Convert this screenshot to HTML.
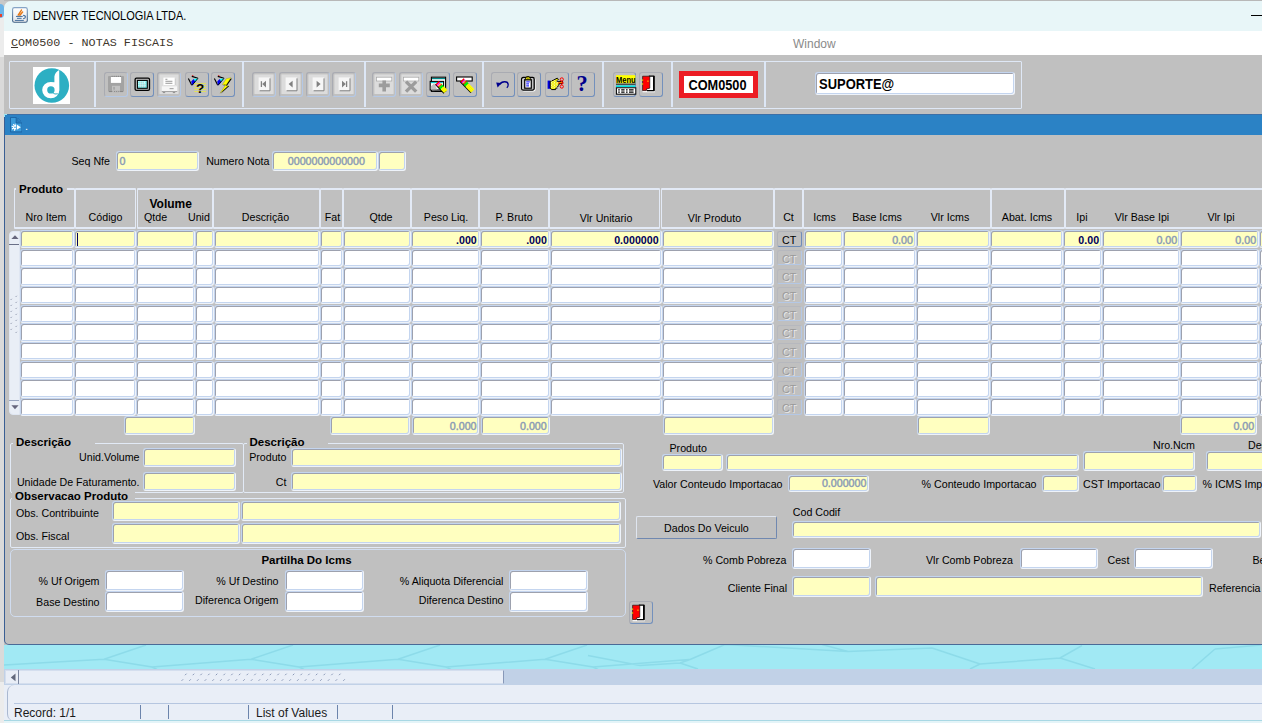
<!DOCTYPE html><html><head><meta charset="utf-8"><title>COM0500 - NOTAS FISCAIS</title><style>
html,body{margin:0;padding:0;background:#c0c0c0;}
#root{position:relative;width:1262px;height:723px;overflow:hidden;background:#c0c0c0;font-family:"Liberation Sans",sans-serif;}
#root div,#root svg.abs{position:absolute;box-sizing:border-box;}
.t{font-size:10.67px;line-height:16px;height:16px;white-space:nowrap;color:#000;}
.b{font-weight:bold;font-size:11.5px;}
.b12{font-size:12px;}
.frlab{background:#c0c0c0;}
.f{border-style:solid;border-width:1px;border-color:#c4d5ef #eef3fa #eef3fa #c4d5ef;box-shadow:inset 1px 1px 0 0 #9da1ae, inset -1px -1px 0 0 #c4d5ef;border-radius:3px;overflow:hidden;}
.f.g{border-width:1px 1.2px 1.7px 1px;}
.f.g span{margin-top:-6.5px;}
.fy{background:#ffffc0;}
.fw{background:#fff;}
.f span{position:absolute;top:50%;margin-top:-7.3px;line-height:15px;font-size:10.67px;white-space:nowrap;}
.f span.nv{font-weight:bold;}
.f span.dn{margin-top:-6.5px;}
.f span.l{left:3px;} .f span.r{right:2px;} .f span.c{left:3px;right:0;text-align:center;}
.gv{color:#8b9cb5;-webkit-text-stroke:0.45px #8b9cb5;} .nv{color:#00005a;}
.hc{border:2px solid #e3eaf6;border-right-width:0.9px;border-left-width:0.9px;border-radius:1px;}
.fr{border:1.8px solid #e2eaf6;border-radius:2px;}
.fr2{border:1px solid #d0dcef;border-radius:5px;}
.ctb{border:1px solid #b0b2b8;border-right-color:#6f8cb8;border-bottom-color:#6f8cb8;border-radius:2.5px;background:#c0c0c0;}
.ctb span{position:absolute;left:0;right:0;top:0.6px;text-align:center;font-size:10.67px;line-height:14px;color:#000;}
.ctb.dis{border-color:#b6b8be;border-right-color:#b4c8e6;border-bottom-color:#b4c8e6;}
.ctb.dis span{color:#9a9a9a;text-shadow:1px 1px 0 #e8e8e8;}
.btn{border:1px solid #dfe5ef;border-right-color:#7088b0;border-bottom-color:#7088b0;border-radius:2px;}
.btn span{position:absolute;left:0;right:0;top:3px;text-align:center;font-size:10.67px;line-height:16px;}
.tb{border:1px solid #a9abb2;border-right-color:#7390bc;border-bottom-color:#7390bc;border-radius:3px;}
.tb.d{border-right-color:#b4c8e6;border-bottom-color:#b4c8e6;}
.tb svg{position:absolute;}
.vsb{background:#e9eef6;border:1px solid #dfe6f2;border-radius:4px 0 0 4px;}
.vsbline{height:1px;background:#6a7088;}
.tsep{width:1.8px;background:#dde7f6;}

</style></head><body><div id="root">
<div style="left:0;top:0;width:4px;height:723px;background:#dadada"></div>
<div style="left:0;top:0;width:4px;height:57px;background:#ececec"></div>
<div style="left:0;top:682px;width:4px;height:41px;background:#ececec"></div>
<div style="left:0;top:0;width:30px;height:12px;background:#c8c8c8"></div>
<div style="left:-4px;top:4px;width:8px;height:14px;background:#6cb4e8;border-radius:4px"></div>
<div style="left:0;top:13.5px;width:2px;height:3px;background:#e8402a"></div>
<div style="left:4px;top:0;width:1258px;height:1px;background:#b8b8b8"></div>
<div style="left:4px;top:1px;width:1258px;height:29.5px;background:#e8f6f8;border-top-left-radius:7px"></div>
<svg class="abs" style="left:12.1px;top:7px" width="15.9" height="15.9" viewBox="0 0 16 16"><defs><linearGradient id="jb" x1="0" y1="0" x2="0" y2="1"><stop offset="0" stop-color="#86a4c6"/><stop offset="1" stop-color="#3e5f84"/></linearGradient><linearGradient id="jf" x1="0" y1="0" x2="0" y2="1"><stop offset="0" stop-color="#fff"/><stop offset="1" stop-color="#e4e6ea"/></linearGradient></defs><rect x="0.6" y="0.6" width="14.8" height="14.8" rx="1.8" fill="url(#jf)" stroke="url(#jb)" stroke-width="1.1"/><path d="M6.2 8.2L9.6 3M7.9 8.3L10.7 5" fill="none" stroke="#e8740c" stroke-width="1.4" stroke-linecap="round" stroke-dasharray="1.4 0.5"/><path d="M4 9.5h6.8M5 11.4h4.7M2.9 13.5h9" fill="none" stroke="#46709c" stroke-width="1"/><path d="M11.2 8.4C14.4 8.6 14.2 11.6 11.2 11.9" fill="none" stroke="#46709c" stroke-width="1.1"/></svg>
<div class="t" style="left:32.9px;top:7.5px;font-size:12px;color:#000;transform:scaleX(0.915);transform-origin:0 0">DENVER TECNOLOGIA LTDA.</div>
<div style="left:1250.5px;top:15px;width:12px;height:1px;background:#000"></div>
<div style="left:4px;top:30.5px;width:1258px;height:24.5px;background:#fff"></div>
<div class="t" style="left:11px;top:35px;font-family:'Liberation Mono',monospace;font-size:11.75px;color:#40362c"><u>C</u>OM0500 - NOTAS FISCAIS</div>
<div class="t" style="left:793px;top:35.5px;font-size:12px;color:#8a8a8a">Window</div>
<div style="left:8.5px;top:60.5px;width:1013.5px;height:48px;border:1.6px solid #dfe8f6;border-radius:1px"></div>
<div class="tsep" style="left:94.3px;top:62px;height:45px"></div>
<div class="tsep" style="left:242.2px;top:62px;height:45px"></div>
<div class="tsep" style="left:363.8px;top:62px;height:45px"></div>
<div class="tsep" style="left:482.2px;top:62px;height:45px"></div>
<div class="tsep" style="left:602.2px;top:62px;height:45px"></div>
<div class="tsep" style="left:671.2px;top:62px;height:45px"></div>
<div class="tsep" style="left:763.8px;top:62px;height:45px"></div>
<div style="left:32.8px;top:66.8px;width:37.4px;height:37.2px;background:#fff"></div>
<svg class="abs" style="left:32.8px;top:66.8px" width="37.4" height="37.2" viewBox="0 0 37.4 37.2"><circle cx="18.8" cy="18.5" r="17.3" fill="#2dafc3"/><path d="M26.2 3 L26.4 23.1 A8.6 8.2 0 1 1 17.8 14.9 L21.4 15.2 L21.4 9.4 Q22 5.4 26.2 3 Z" fill="#fff"/><circle cx="17.9" cy="22.9" r="3.7" fill="#2dafc3"/><path d="M19.6 25.6 Q21.6 27.8 24.8 26.8" fill="none" stroke="#2dafc3" stroke-width="1"/></svg>
<div class="tb d" style="left:104px;top:72.2px;width:24px;height:24.7px"><svg style="left:-1px;top:-1px" width="24" height="24.7" viewBox="0 0 24 24.7"><rect x="4" y="4" width="16" height="15.8" rx="0.8" fill="#a3a3a3"/><rect x="6.9" y="4.9" width="10.2" height="6" fill="#fff"/><path d="M7.6 4.3h10" stroke="#6c6c6c" stroke-width="0.8" stroke-dasharray="1 1.1"/><rect x="8" y="13.8" width="8" height="5" fill="#c2c2c2"/><rect x="9.2" y="14.9" width="1.7" height="2.8" fill="#a6a6a6"/><path d="M5 19.6h3M9 19.6h6M16 19.6h3" stroke="#808080" stroke-width="0.9" stroke-dasharray="3 0 0 0"/><path d="M9 19.6h6" stroke="#c0c0c0" stroke-width="1" stroke-dasharray="1.1 1"/></svg></div>
<div class="tb" style="left:130.3px;top:72.2px;width:24px;height:24.7px"><svg style="left:-1px;top:-1px" width="24" height="24.7" viewBox="0 0 24 24.7"><rect x="5.1" y="6.2" width="14.4" height="12.2" rx="1.4" fill="none" stroke="#000" stroke-width="1.3"/><rect x="7.4" y="8.4" width="9.9" height="7.9" fill="#7ff3f3" stroke="#000" stroke-width="1.1"/><path d="M8.4 9.6h8M8.4 11.6h8M8.4 13.6h8" stroke="#fff" stroke-width="0.9" stroke-dasharray="1 1"/><path d="M8.9 10.6h7M8.9 12.6h7M8.9 14.6h7" stroke="#fff" stroke-width="0.9" stroke-dasharray="1 1" stroke-dashoffset="1"/><path d="M9.4 10.4h4M9.4 12.4h6M9.4 14.3h6" stroke="#b8c4c4" stroke-width="0.6"/></svg></div>
<div class="tb d" style="left:157.3px;top:72.2px;width:24px;height:24.7px"><svg style="left:-1px;top:-1px" width="24" height="24.7" viewBox="0 0 24 24.7"><rect x="2.4" y="2.4" width="19.2" height="19.6" fill="#dcdcdc"/><path d="M7 6h10.4l1 .8v6.6H7z" fill="#b8b8b8"/><rect x="6.4" y="5.6" width="11.4" height="7.4" fill="#fff"/><path d="M8.4 7.3h2M8.4 9.3h7M8.4 11.3h7" stroke="#8c8c8c" stroke-width="0.9"/><path d="M4.8 14.2h15.2v5H4.8z" fill="#f6f6f6"/><path d="M5 14.2l1.4-1h12.4l1.2 1" fill="#e8e8e8"/><path d="M12.6 16.6h4" stroke="#a8a8a8" stroke-width="1.2"/><path d="M4.8 19.5h15.4" stroke="#9c9c9c" stroke-width="0.9"/><path d="M5.8 20.6h2.4M15.8 20.6h2.4" stroke="#909090" stroke-width="1"/></svg></div>
<div class="tb" style="left:184.6px;top:72.2px;width:24px;height:24.7px"><svg style="left:-1px;top:-1px" width="24" height="24.7" viewBox="0 0 24 24.7"><path d="M3.4 6.4L6.6 13" stroke="#000" stroke-width="1.1"/><circle cx="7.7" cy="4" r="0.8" fill="#f00"/><path d="M6.8 4.4L13 6.2" stroke="#000" stroke-width="1.1"/><path d="M8.6 7L13 6.4L10.4 10Z" fill="#0ff"/><path d="M6.2 9.6L8.6 7L10.4 10L7 13.4Z" fill="#00e"/><path d="M13 6.3L7 13.4" stroke="#000" stroke-width="0.9"/><rect x="9.6" y="11.0" width="1" height="1" fill="#ff0"/><rect x="9.6" y="13.0" width="1" height="1" fill="#ff0"/><rect x="9.6" y="15.0" width="1" height="1" fill="#ff0"/><rect x="9.6" y="17.0" width="1" height="1" fill="#ff0"/><rect x="9.6" y="19.0" width="1" height="1" fill="#ff0"/><rect x="11.6" y="11.0" width="1" height="1" fill="#ff0"/><rect x="11.6" y="13.0" width="1" height="1" fill="#ff0"/><rect x="11.6" y="15.0" width="1" height="1" fill="#ff0"/><rect x="11.6" y="17.0" width="1" height="1" fill="#ff0"/><rect x="11.6" y="19.0" width="1" height="1" fill="#ff0"/><rect x="13.6" y="11.0" width="1" height="1" fill="#ff0"/><rect x="13.6" y="13.0" width="1" height="1" fill="#ff0"/><rect x="13.6" y="15.0" width="1" height="1" fill="#ff0"/><rect x="13.6" y="17.0" width="1" height="1" fill="#ff0"/><rect x="13.6" y="19.0" width="1" height="1" fill="#ff0"/><rect x="15.6" y="11.0" width="1" height="1" fill="#ff0"/><rect x="15.6" y="13.0" width="1" height="1" fill="#ff0"/><rect x="15.6" y="15.0" width="1" height="1" fill="#ff0"/><rect x="15.6" y="17.0" width="1" height="1" fill="#ff0"/><rect x="15.6" y="19.0" width="1" height="1" fill="#ff0"/><rect x="17.6" y="11.0" width="1" height="1" fill="#ff0"/><rect x="17.6" y="13.0" width="1" height="1" fill="#ff0"/><rect x="17.6" y="15.0" width="1" height="1" fill="#ff0"/><rect x="17.6" y="17.0" width="1" height="1" fill="#ff0"/><rect x="17.6" y="19.0" width="1" height="1" fill="#ff0"/><rect x="19.6" y="11.0" width="1" height="1" fill="#ff0"/><rect x="19.6" y="13.0" width="1" height="1" fill="#ff0"/><rect x="19.6" y="15.0" width="1" height="1" fill="#ff0"/><rect x="19.6" y="17.0" width="1" height="1" fill="#ff0"/><rect x="19.6" y="19.0" width="1" height="1" fill="#ff0"/><text x="11" y="20.6" font-family="Liberation Sans,sans-serif" font-weight="bold" font-size="13.5" fill="#000">?</text></svg></div>
<div class="tb" style="left:210.9px;top:72.2px;width:24px;height:24.7px"><svg style="left:-1px;top:-1px" width="24" height="24.7" viewBox="0 0 24 24.7"><path d="M3.4 6.4L6.6 13" stroke="#000" stroke-width="1.1"/><circle cx="7.7" cy="4" r="0.8" fill="#f00"/><path d="M6.8 4.4L13 6.2" stroke="#000" stroke-width="1.1"/><path d="M8.6 7L13 6.4L10.4 10Z" fill="#0ff"/><path d="M6.2 9.6L8.6 7L10.4 10L7 13.4Z" fill="#00e"/><path d="M13 6.3L7 13.4" stroke="#000" stroke-width="0.9"/><path d="M21 6.4L16.3 7.4L12.3 13.2L15.4 13.2L10 21.6L18.3 14L15.7 14Z" fill="#000"/><path d="M20 5.7L15.3 6.7L11.3 12.7L14.7 12.7L9 21.3L17.3 13.7L14.7 13.7Z" fill="#ff0" stroke="#7a7a00" stroke-width="0.3"/></svg></div>
<div class="tb d" style="left:252.4px;top:72.2px;width:24px;height:24.7px"><svg style="left:-1px;top:-1px" width="24" height="24.7" viewBox="0 0 24 24.7"><rect x="2.4" y="2.4" width="19.2" height="19.6" fill="#dcdcdc"/><rect x="6.6" y="5.4" width="11.4" height="13.2" fill="#f6f6f6"/><path d="M18 6.4v12.4H7.6" fill="none" stroke="#808080" stroke-width="1"/><path d="M9.4 9.2v5.8" stroke="#808080" stroke-width="1.3"/><path d="M14 8.8v6.6l-3.8-3.3z" fill="#808080"/></svg></div>
<div class="tb d" style="left:279px;top:72.2px;width:24px;height:24.7px"><svg style="left:-1px;top:-1px" width="24" height="24.7" viewBox="0 0 24 24.7"><rect x="2.4" y="2.4" width="19.2" height="19.6" fill="#dcdcdc"/><rect x="6.6" y="5.4" width="11.4" height="13.2" fill="#f6f6f6"/><path d="M18 6.4v12.4H7.6" fill="none" stroke="#808080" stroke-width="1"/><path d="M13.6 8.8v6.6l-4-3.3z" fill="#808080"/></svg></div>
<div class="tb d" style="left:305.7px;top:72.2px;width:24px;height:24.7px"><svg style="left:-1px;top:-1px" width="24" height="24.7" viewBox="0 0 24 24.7"><rect x="2.4" y="2.4" width="19.2" height="19.6" fill="#dcdcdc"/><rect x="6.6" y="5.4" width="11.4" height="13.2" fill="#f6f6f6"/><path d="M18 6.4v12.4H7.6" fill="none" stroke="#808080" stroke-width="1"/><path d="M10.6 8.8v6.6l4-3.3z" fill="#808080"/></svg></div>
<div class="tb d" style="left:332.4px;top:72.2px;width:24px;height:24.7px"><svg style="left:-1px;top:-1px" width="24" height="24.7" viewBox="0 0 24 24.7"><rect x="2.4" y="2.4" width="19.2" height="19.6" fill="#dcdcdc"/><rect x="6.6" y="5.4" width="11.4" height="13.2" fill="#f6f6f6"/><path d="M18 6.4v12.4H7.6" fill="none" stroke="#808080" stroke-width="1"/><path d="M14.6 9.2v5.8" stroke="#808080" stroke-width="1.3"/><path d="M10 8.8v6.6l3.8-3.3z" fill="#808080"/></svg></div>
<div class="tb d" style="left:372.4px;top:72.2px;width:24px;height:24.7px"><svg style="left:-1px;top:-1px" width="24" height="24.7" viewBox="0 0 24 24.7"><rect x="2.4" y="2.4" width="19.2" height="19.6" fill="#dcdcdc"/><rect x="4.4" y="5.2" width="15.4" height="3.8" fill="#fff" stroke="#a4a4a4" stroke-width="0.7"/><path d="M12.2 8.4v11M6.8 13.4h11" stroke="#9c9c9c" stroke-width="3.6"/></svg></div>
<div class="tb d" style="left:399px;top:72.2px;width:24px;height:24.7px"><svg style="left:-1px;top:-1px" width="24" height="24.7" viewBox="0 0 24 24.7"><rect x="2.4" y="2.4" width="19.2" height="19.6" fill="#dcdcdc"/><rect x="4.4" y="5.2" width="15.4" height="3.8" fill="#fff" stroke="#a4a4a4" stroke-width="0.7"/><path d="M7 9.6l10.2 10M17.2 9.6l-10.2 10" stroke="#9c9c9c" stroke-width="3.4"/></svg></div>
<div class="tb" style="left:425.6px;top:72.2px;width:24px;height:24.7px"><svg style="left:-1px;top:-1px" width="24" height="24.7" viewBox="0 0 24 24.7"><rect x="5.4" y="5.2" width="14.2" height="14.2" fill="#fff" stroke="#000" stroke-width="1.1"/><path d="M6 6.6h13" stroke="#088" stroke-width="1.2"/><rect x="4.2" y="9.4" width="13.4" height="8.6" fill="#fff" stroke="#000" stroke-width="1.1"/><path d="M4.8 10.6h12" stroke="#0cc" stroke-width="1.1"/><path d="M4.8 17.4v-3l3.4-3.2l3 6.2z" fill="#c0c0c0"/><path d="M8.6 19.4h9" stroke="#000" stroke-width="1"/><g transform="translate(11.2,10.6) rotate(46)"><path d="M0 2.3h12.4" stroke="#000" stroke-width="1.6"/><rect x="0" y="-2.3" width="1.4" height="4.6" fill="#f00"/><rect x="1.4" y="-2.3" width="1.4" height="4.6" fill="#f0f"/><rect x="2.8" y="-2.3" width="0.9" height="4.6" fill="#ff0"/><rect x="3.7" y="-2.3" width="1" height="4.6" fill="#f00"/><rect x="4.7" y="-2.3" width="2.6" height="4.6" fill="#0e0"/><rect x="7.3" y="-2.3" width="5.1000000000000005" height="4.6" fill="#ff0"/><path d="M7.3 -0.8h5.1000000000000005M7.3 0.8h5.1000000000000005" stroke="#e0e000" stroke-width="0.5"/></g></svg></div>
<div class="tb" style="left:452.6px;top:72.2px;width:24px;height:24.7px"><svg style="left:-1px;top:-1px" width="24" height="24.7" viewBox="0 0 24 24.7"><rect x="3.6" y="5" width="15.6" height="4" fill="#fff" stroke="#000" stroke-width="1.1"/><g transform="translate(9,7.8) rotate(46)"><path d="M0 2.3h15.4" stroke="#000" stroke-width="1.6"/><rect x="0" y="-2.3" width="1.4" height="4.6" fill="#f00"/><rect x="1.4" y="-2.3" width="1.4" height="4.6" fill="#f0f"/><rect x="2.8" y="-2.3" width="0.9" height="4.6" fill="#ff0"/><rect x="3.7" y="-2.3" width="1" height="4.6" fill="#f00"/><rect x="4.7" y="-2.3" width="2.6" height="4.6" fill="#0e0"/><rect x="7.3" y="-2.3" width="8.100000000000001" height="4.6" fill="#ff0"/><path d="M7.3 -0.8h8.100000000000001M7.3 0.8h8.100000000000001" stroke="#e0e000" stroke-width="0.5"/></g></svg></div>
<div class="tb" style="left:490.7px;top:72.2px;width:24px;height:24.7px"><svg style="left:-1px;top:-1px" width="24" height="24.7" viewBox="0 0 24 24.7"><path d="M8.8 12.6C10.4 9 17 8.6 17.2 12.6C17.3 14.2 16.6 15 15.8 15.8" fill="none" stroke="#00008c" stroke-width="1.3"/><path d="M5.2 10.6L10.6 11L6.6 15.4Z" fill="#00008c"/></svg></div>
<div class="tb" style="left:517.2px;top:72.2px;width:24px;height:24.7px"><svg style="left:-1px;top:-1px" width="24" height="24.7" viewBox="0 0 24 24.7"><rect x="5.4" y="6.3" width="12.6" height="12.6" rx="1.5" fill="none" stroke="#fff" stroke-width="1.2"/><rect x="4.6" y="5.5" width="12.6" height="12.6" rx="1.5" fill="none" stroke="#000" stroke-width="1.3"/><rect x="7.7" y="7.8" width="6.6" height="8.4" fill="#fff" stroke="#000" stroke-width="1.2"/><path d="M8 7.7L9.6 4.6H12.2L13.9 7.7Z" fill="#f4ec00" stroke="#000" stroke-width="0.9" stroke-linejoin="round"/><path d="M10.2 6h1.4" stroke="#000" stroke-width="0.8"/><path d="M9.2 9.9h3.6M9.2 11.9h2.8M9.2 13.9h2.8" stroke="#00f" stroke-width="1"/></svg></div>
<div class="tb" style="left:544.5px;top:72.2px;width:24px;height:24.7px"><svg style="left:-1px;top:-1px" width="24" height="24.7" viewBox="0 0 24 24.7"><rect x="2.6" y="8.6" width="2.5" height="8.2" fill="#00d"/><path d="M5.2 9.4l3.2-1.2l3.8-2l1.2 1l-1.8 2.2h6v2.2h-3.6v1.6h-1v1.6h-1v1.6h-1.4v1.2H6.6L5.2 16z" fill="#ee0" stroke="#000" stroke-width="1"/><rect x="6.0" y="8.4" width="0.8" height="0.8" fill="#fff"/><rect x="6.0" y="10.0" width="0.8" height="0.8" fill="#fff"/><rect x="6.0" y="11.6" width="0.8" height="0.8" fill="#fff"/><rect x="6.0" y="13.2" width="0.8" height="0.8" fill="#fff"/><rect x="6.0" y="14.8" width="0.8" height="0.8" fill="#fff"/><rect x="7.6" y="9.2" width="0.8" height="0.8" fill="#fff"/><rect x="7.6" y="10.8" width="0.8" height="0.8" fill="#fff"/><rect x="7.6" y="12.4" width="0.8" height="0.8" fill="#fff"/><rect x="7.6" y="14.0" width="0.8" height="0.8" fill="#fff"/><rect x="7.6" y="15.6" width="0.8" height="0.8" fill="#fff"/><rect x="9.2" y="8.4" width="0.8" height="0.8" fill="#fff"/><rect x="9.2" y="10.0" width="0.8" height="0.8" fill="#fff"/><rect x="9.2" y="11.6" width="0.8" height="0.8" fill="#fff"/><rect x="9.2" y="13.2" width="0.8" height="0.8" fill="#fff"/><rect x="9.2" y="14.8" width="0.8" height="0.8" fill="#fff"/><rect x="10.8" y="9.2" width="0.8" height="0.8" fill="#fff"/><rect x="10.8" y="10.8" width="0.8" height="0.8" fill="#fff"/><rect x="10.8" y="12.4" width="0.8" height="0.8" fill="#fff"/><rect x="10.8" y="14.0" width="0.8" height="0.8" fill="#fff"/><rect x="10.8" y="15.6" width="0.8" height="0.8" fill="#fff"/><rect x="12.4" y="8.4" width="0.8" height="0.8" fill="#fff"/><rect x="12.4" y="10.0" width="0.8" height="0.8" fill="#fff"/><rect x="12.4" y="11.6" width="0.8" height="0.8" fill="#fff"/><rect x="12.4" y="13.2" width="0.8" height="0.8" fill="#fff"/><rect x="12.4" y="14.8" width="0.8" height="0.8" fill="#fff"/><circle cx="16.8" cy="7.4" r="1.6" fill="none" stroke="#f00" stroke-width="1"/><circle cx="16.8" cy="14.6" r="1.6" fill="none" stroke="#f00" stroke-width="1"/><path d="M15.8 8.8l2.6 2.4M15.8 13.2l2.6-2.4M13 11h5" stroke="#f00" stroke-width="0.9"/></svg></div>
<div class="tb" style="left:570.6px;top:72.2px;width:24px;height:24.7px"><svg style="left:-1px;top:-1px" width="24" height="24.7" viewBox="0 0 24 24.7"><text x="5.4" y="19.4" font-family="Liberation Serif,serif" font-weight="bold" font-size="22.5" fill="#00008c">?</text></svg></div>
<div class="tb" style="left:612.5px;top:72.2px;width:23.4px;height:24.7px"><svg style="left:-1px;top:-1px" width="24" height="24.7" viewBox="0 0 24 24.7"><rect x="3" y="3.2" width="19.4" height="8" fill="#ff0"/><text x="3" y="10.6" font-family="Liberation Sans,sans-serif" font-weight="bold" font-size="9.6" fill="#000" textLength="19.6" lengthAdjust="spacingAndGlyphs">Menu</text><path d="M3 12.2h19.4" stroke="#000" stroke-width="0.9"/><path d="M3 14.2h19.4" stroke="#0dd" stroke-width="1.6"/><rect x="3.4" y="15.8" width="19.4" height="6.4" fill="#fff" stroke="#000" stroke-width="1"/><path d="M5.2 17.8h1.6M8.2 17.8h3.4M13 17.8h1.6M16 17.8h4.6M5.2 20.2h1.6M8.2 20.2h3.4M13 20.2h1.6M16 20.2h4.6" stroke="#000" stroke-width="1.2"/></svg></div>
<div class="tb" style="left:638.9px;top:72.2px;width:24px;height:24.7px"><svg style="left:-1px;top:-1px" width="24" height="24.7" viewBox="0 0 24 24.7"><path d="M3.6 19.6h12.2" stroke="#fff" stroke-width="1.4"/><path d="M9.8 4.1h5v14.6H8" fill="#fff" stroke="#000" stroke-width="1.2"/><path d="M14.9 4.1v14.6" stroke="#000" stroke-width="1.6"/><path d="M3.6 4.2h7.2v12l-3.4.8v1.6H3.6z" fill="#f00" stroke="#000" stroke-width="0.6"/><rect x="8.4" y="8.6" width="1.1" height="1.1" fill="#ff0"/><path d="M2.6 8.1h1.6M2.6 12h1.6" stroke="#ff0" stroke-width="1"/></svg></div>
<div style="left:679px;top:71px;width:79px;height:27px;background:#fff;border:5px solid #ec1c24"></div>
<div class="t" style="left:678.3px;width:79px;text-align:center;top:76.6px;font-size:14px;font-weight:bold;transform:scaleX(0.91)">COM0500</div>
<div class="f fw" style="left:815.3px;top:72.2px;width:199.8px;height:23.2px"></div>
<div class="t" style="left:818.6px;top:76.3px;font-size:14px;font-weight:bold;transform:scaleX(0.925);transform-origin:0 0">SUPORTE@</div>
<div style="left:4px;top:113.5px;width:1258px;height:531px;background:#c0c0c0;border-left:1.5px solid #3a5f94;border-bottom:1.5px solid #4a6a96;border-top-left-radius:3px;border-bottom-left-radius:5px"></div>
<div style="left:5px;top:114px;width:1257px;height:21px;background:#2b82c5;border-top:1px solid #3d6fa6"></div>
<svg class="abs" style="left:9.5px;top:117.3px" width="12.4" height="15.3" viewBox="0 0 12.4 15.3"><path d="M0.4 0.4H6.2V6H12V14.9H0.4Z" fill="#3b9ad9" stroke="#1c62a2" stroke-width="1"/><path d="M7.9 1.2L10.8 4.1H7.9Z" fill="#3b96d4" stroke="#2068a8" stroke-width="0.7"/><clipPath id="gh"><rect x="0" y="5" width="5.9" height="10"/></clipPath><g clip-path="url(#gh)"><circle cx="5.2" cy="10.2" r="2.7" fill="none" stroke="#fff" stroke-width="1.8" stroke-dasharray="1.1 1"/><circle cx="5.2" cy="10.2" r="2.2" fill="#fff"/><circle cx="5" cy="10.2" r="0.8" fill="#3b9ad9"/></g><path d="M6.8 7.6L10.8 10.2L6.8 12.8Z" fill="#fff"/></svg>
<div style="left:4.2px;top:114px;width:3px;height:3px;border-left:1.2px solid #9fe8f4;border-top:1.2px solid #9fe8f4"></div>
<div class="t" style="left:25px;top:118.2px;color:#fff;font-size:11px">.</div>
<div style="left:4px;top:644.5px;width:1258px;height:24.5px;background:#a1e9f4"></div>
<svg class="abs" style="left:4px;top:644.5px" width="1258" height="24.5" viewBox="4 644.5 1258 24.5"><path fill="none" stroke="#8ddbe9" stroke-width="1.5" d="M104 658.8L146 644.5M104 658.8L152 666.5L157 669M152 666.5L251 658.8M251 658.8L293 644.5M251 658.8L299 666.5L304 669M299 666.5L398 658.8M398 658.8L440 644.5M398 658.8L446 666.5L451 669M446 666.5L545 658.8M545 658.8L587 644.5M545 658.8L593 666.5L598 669M593 666.5L692 658.8M4 664.6L104 658.8M588 655.0L640 665.0M640 665.0L680 662.5M690 659.0L725 644.0M680 662.5L698 668.5M680 662.5L690 659.0M848 651.0L822 644.0M848 651.0L932 647.5M932 647.5L980 663.5M980 663.5L970 668.5M980 663.5L1060 657.5M1060 657.5L1082 645.0M1060 657.5L1095 668.5M1215 648.5L1261 644.5M1215 648.5L1192 668.5M725 644.0L848 651.0"/></svg>
<div style="left:4px;top:669px;width:1258px;height:15.5px;background:#c1d1e7"></div>
<div style="left:5px;top:669.5px;width:498.5px;height:14.5px;background:#e9eef7;border:1px solid #d4deee;border-right-color:#8898b8"></div>
<div style="left:5px;top:669.5px;width:14px;height:14.5px;border-right:1px solid #7a86a0"></div>
<svg class="abs" style="left:5px;top:669.5px" width="500" height="15" viewBox="0 0 500 15"><path d="M10.5 3.6v7.6L5.8 7.4z" fill="#62687c"/><g stroke="#7d8cae" stroke-width="0.9"><path d="M180.0 5.2l1.5-1.5"/><path d="M187.7 5.2l1.5-1.5"/><path d="M195.4 5.2l1.5-1.5"/><path d="M203.1 5.2l1.5-1.5"/><path d="M210.8 5.2l1.5-1.5"/><path d="M218.5 5.2l1.5-1.5"/><path d="M226.2 5.2l1.5-1.5"/><path d="M233.9 5.2l1.5-1.5"/><path d="M241.6 5.2l1.5-1.5"/><path d="M249.3 5.2l1.5-1.5"/><path d="M257.0 5.2l1.5-1.5"/><path d="M264.7 5.2l1.5-1.5"/><path d="M272.4 5.2l1.5-1.5"/><path d="M280.1 5.2l1.5-1.5"/><path d="M287.8 5.2l1.5-1.5"/><path d="M295.5 5.2l1.5-1.5"/><path d="M303.2 5.2l1.5-1.5"/><path d="M310.9 5.2l1.5-1.5"/><path d="M318.6 5.2l1.5-1.5"/><path d="M326.3 5.2l1.5-1.5"/><path d="M334.0 5.2l1.5-1.5"/><path d="M176.6 10.8l1.5-1.5"/><path d="M184.3 10.8l1.5-1.5"/><path d="M192.0 10.8l1.5-1.5"/><path d="M199.7 10.8l1.5-1.5"/><path d="M207.4 10.8l1.5-1.5"/><path d="M215.1 10.8l1.5-1.5"/><path d="M222.8 10.8l1.5-1.5"/><path d="M230.5 10.8l1.5-1.5"/><path d="M238.2 10.8l1.5-1.5"/><path d="M245.9 10.8l1.5-1.5"/><path d="M253.6 10.8l1.5-1.5"/><path d="M261.3 10.8l1.5-1.5"/><path d="M269.0 10.8l1.5-1.5"/><path d="M276.7 10.8l1.5-1.5"/><path d="M284.4 10.8l1.5-1.5"/><path d="M292.1 10.8l1.5-1.5"/><path d="M299.8 10.8l1.5-1.5"/><path d="M307.5 10.8l1.5-1.5"/><path d="M315.2 10.8l1.5-1.5"/><path d="M322.9 10.8l1.5-1.5"/><path d="M330.6 10.8l1.5-1.5"/><path d="M338.3 10.8l1.5-1.5"/></g></svg>
<div style="left:4px;top:684.5px;width:1258px;height:36px;background:#e9eef7"></div>
<div style="left:7px;top:685px;width:1258px;height:36px;border-left:1px solid #aab8d0;border-radius:7px 0 0 7px"></div>
<div style="left:14px;top:702.8px;width:1248px;height:1.2px;background:#b6c6e0"></div>
<div style="left:4px;top:720px;width:1258px;height:1px;background:#a8d8e4"></div>
<div style="left:4px;top:721px;width:1258px;height:2px;background:#e4f4f8"></div>
<div class="t" style="left:14px;top:704.5px;font-size:12px;color:#1a1a1a">Record: 1/1</div>
<div class="t" style="left:256px;top:704.5px;font-size:12px;color:#1a1a1a">List of Values</div>
<div style="left:140px;top:705px;width:1.3px;height:14px;background:#6c84ac"></div>
<div style="left:168px;top:705px;width:1.3px;height:14px;background:#6c84ac"></div>
<div style="left:248px;top:705px;width:1.3px;height:14px;background:#6c84ac"></div>
<div style="left:337px;top:705px;width:1.3px;height:14px;background:#6c84ac"></div>
<div style="left:392px;top:705px;width:1.3px;height:14px;background:#6c84ac"></div>
<div class="t " style="right:1152px;top:152.7px">Seq Nfe</div>
<div class="f fy" style="left:115.5px;top:151.4px;width:83.7px;height:19.8px"><span class="gv l">0</span></div>
<div class="t " style="right:992.5px;top:152.7px">Numero Nota</div>
<div class="f fy" style="left:271.5px;top:151.4px;width:106.7px;height:19.8px"><span class="gv c">0000000000000</span></div>
<div class="f fy" style="left:378.3px;top:151.4px;width:28.2px;height:19.8px"></div>
<div class="hc" style="left:13.9px;top:188.3px;width:61.3px;height:40.69999999999999px;border-left-width:1.5px;"></div>
<div class="hc" style="left:75.2px;top:188.3px;width:61.3px;height:40.69999999999999px;"></div>
<div class="hc" style="left:136.5px;top:188.3px;width:76.1px;height:40.69999999999999px;"></div>
<div class="hc" style="left:212.6px;top:188.3px;width:107.8px;height:40.69999999999999px;"></div>
<div class="hc" style="left:320.4px;top:188.3px;width:22.9px;height:40.69999999999999px;"></div>
<div class="hc" style="left:343.3px;top:188.3px;width:67.9px;height:40.69999999999999px;"></div>
<div class="hc" style="left:411.2px;top:188.3px;width:68.2px;height:40.69999999999999px;"></div>
<div class="hc" style="left:479.4px;top:188.3px;width:69.3px;height:40.69999999999999px;"></div>
<div class="hc" style="left:548.7px;top:188.3px;width:111.8px;height:40.69999999999999px;"></div>
<div class="hc" style="left:660.5px;top:188.3px;width:113.3px;height:40.69999999999999px;"></div>
<div class="hc" style="left:773.8px;top:188.3px;width:29.0px;height:40.69999999999999px;"></div>
<div class="hc" style="left:802.8px;top:188.3px;width:188.2px;height:40.69999999999999px;"></div>
<div class="hc" style="left:991.0px;top:188.3px;width:73.5px;height:40.69999999999999px;"></div>
<div class="hc" style="left:1064.5px;top:188.3px;width:235.5px;height:40.69999999999999px;"></div>
<div class="t b frlab" style="left:16px;top:181px;padding:0 4px 0 3px">Produto</div>
<div class="t " style="left:-54px;width:200px;text-align:center;top:208.7px">Nro Item</div>
<div class="t " style="left:5.5px;width:200px;text-align:center;top:208.7px">Código</div>
<div class="t b b12" style="left:70.69999999999999px;width:200px;text-align:center;top:196.0px">Volume</div>
<div class="t " style="left:144px;top:208.7px">Qtde</div>
<div class="t " style="left:188px;top:208.7px">Unid</div>
<div class="t " style="left:165.5px;width:200px;text-align:center;top:208.7px">Descrição</div>
<div class="t " style="left:232.5px;width:200px;text-align:center;top:208.7px">Fat</div>
<div class="t " style="left:281px;width:200px;text-align:center;top:208.7px">Qtde</div>
<div class="t " style="left:346px;width:200px;text-align:center;top:208.7px">Peso Liq.</div>
<div class="t " style="left:414px;width:200px;text-align:center;top:208.7px">P. Bruto</div>
<div class="t " style="left:506px;width:200px;text-align:center;top:210.0px">Vlr Unitario</div>
<div class="t " style="left:614.5px;width:200px;text-align:center;top:210.0px">Vlr Produto</div>
<div class="t " style="left:688.5px;width:200px;text-align:center;top:208.7px">Ct</div>
<div class="t " style="left:724.5px;width:200px;text-align:center;top:208.7px">Icms</div>
<div class="t " style="left:777px;width:200px;text-align:center;top:208.7px">Base Icms</div>
<div class="t " style="left:850px;width:200px;text-align:center;top:208.7px">Vlr Icms</div>
<div class="t " style="left:927px;width:200px;text-align:center;top:208.7px">Abat. Icms</div>
<div class="t " style="left:982px;width:200px;text-align:center;top:208.7px">Ipi</div>
<div class="t " style="left:1042px;width:200px;text-align:center;top:208.7px">Vlr Base Ipi</div>
<div class="t " style="left:1121px;width:200px;text-align:center;top:208.7px">Vlr Ipi</div>
<div class="f fy g" style="left:20.2px;top:229.9px;width:54.0px;height:18.6px"></div>
<div class="f fy g" style="left:74.1px;top:229.9px;width:62.1px;height:18.6px"></div>
<div class="f fy g" style="left:136.1px;top:229.9px;width:58.8px;height:18.6px"></div>
<div class="f fy g" style="left:195.2px;top:229.9px;width:18.8px;height:18.6px"></div>
<div class="f fy g" style="left:214.2px;top:229.9px;width:105.8px;height:18.6px"></div>
<div class="f fy g" style="left:320.2px;top:229.9px;width:22.8px;height:18.6px"></div>
<div class="f fy g" style="left:343.3px;top:229.9px;width:67.5px;height:18.6px"></div>
<div class="f fy g" style="left:411.0px;top:229.9px;width:68.8px;height:18.6px"><span class="nv r">.000</span></div>
<div class="f fy g" style="left:480.1px;top:229.9px;width:69.8px;height:18.6px"><span class="nv r">.000</span></div>
<div class="f fy g" style="left:550.0px;top:229.9px;width:111.6px;height:18.6px"><span class="nv r">0.000000</span></div>
<div class="f fy g" style="left:662.0px;top:229.9px;width:112.0px;height:18.6px"></div>
<div class="ctb" style="left:776.6px;top:231.3px;width:25.2px;height:15.4px"><span>CT</span></div>
<div class="f fy g" style="left:804.0px;top:229.9px;width:39.0px;height:18.6px"></div>
<div class="f fy g" style="left:843.2px;top:229.9px;width:72.7px;height:18.6px"><span class="gv r">0.00</span></div>
<div class="f fy g" style="left:916.1px;top:229.9px;width:73.9px;height:18.6px"></div>
<div class="f fy g" style="left:990.2px;top:229.9px;width:73.0px;height:18.6px"></div>
<div class="f fy g" style="left:1063.3px;top:229.9px;width:38.8px;height:18.6px"><span class="nv r">0.00</span></div>
<div class="f fy g" style="left:1102.0px;top:229.9px;width:78.2px;height:18.6px"><span class="gv r">0.00</span></div>
<div class="f fy g" style="left:1180.2px;top:229.9px;width:78.9px;height:18.6px"><span class="gv r">0.00</span></div>
<div class="f fy g" style="left:1259.1px;top:229.9px;width:43.1px;height:18.6px"></div>
<div class="f fw g" style="left:20.2px;top:248.57px;width:54.0px;height:18.6px"></div>
<div class="f fw g" style="left:74.1px;top:248.57px;width:62.1px;height:18.6px"></div>
<div class="f fw g" style="left:136.1px;top:248.57px;width:58.8px;height:18.6px"></div>
<div class="f fw g" style="left:195.2px;top:248.57px;width:18.8px;height:18.6px"></div>
<div class="f fw g" style="left:214.2px;top:248.57px;width:105.8px;height:18.6px"></div>
<div class="f fw g" style="left:320.2px;top:248.57px;width:22.8px;height:18.6px"></div>
<div class="f fw g" style="left:343.3px;top:248.57px;width:67.5px;height:18.6px"></div>
<div class="f fw g" style="left:411.0px;top:248.57px;width:68.8px;height:18.6px"></div>
<div class="f fw g" style="left:480.1px;top:248.57px;width:69.8px;height:18.6px"></div>
<div class="f fw g" style="left:550.0px;top:248.57px;width:111.6px;height:18.6px"></div>
<div class="f fw g" style="left:662.0px;top:248.57px;width:112.0px;height:18.6px"></div>
<div class="ctb dis" style="left:776.6px;top:249.97px;width:25.2px;height:15.4px"><span>CT</span></div>
<div class="f fw g" style="left:804.0px;top:248.57px;width:39.0px;height:18.6px"></div>
<div class="f fw g" style="left:843.2px;top:248.57px;width:72.7px;height:18.6px"></div>
<div class="f fw g" style="left:916.1px;top:248.57px;width:73.9px;height:18.6px"></div>
<div class="f fw g" style="left:990.2px;top:248.57px;width:73.0px;height:18.6px"></div>
<div class="f fw g" style="left:1063.3px;top:248.57px;width:38.8px;height:18.6px"></div>
<div class="f fw g" style="left:1102.0px;top:248.57px;width:78.2px;height:18.6px"></div>
<div class="f fw g" style="left:1180.2px;top:248.57px;width:78.9px;height:18.6px"></div>
<div class="f fw g" style="left:1259.1px;top:248.57px;width:43.1px;height:18.6px"></div>
<div class="f fw g" style="left:20.2px;top:267.23px;width:54.0px;height:18.6px"></div>
<div class="f fw g" style="left:74.1px;top:267.23px;width:62.1px;height:18.6px"></div>
<div class="f fw g" style="left:136.1px;top:267.23px;width:58.8px;height:18.6px"></div>
<div class="f fw g" style="left:195.2px;top:267.23px;width:18.8px;height:18.6px"></div>
<div class="f fw g" style="left:214.2px;top:267.23px;width:105.8px;height:18.6px"></div>
<div class="f fw g" style="left:320.2px;top:267.23px;width:22.8px;height:18.6px"></div>
<div class="f fw g" style="left:343.3px;top:267.23px;width:67.5px;height:18.6px"></div>
<div class="f fw g" style="left:411.0px;top:267.23px;width:68.8px;height:18.6px"></div>
<div class="f fw g" style="left:480.1px;top:267.23px;width:69.8px;height:18.6px"></div>
<div class="f fw g" style="left:550.0px;top:267.23px;width:111.6px;height:18.6px"></div>
<div class="f fw g" style="left:662.0px;top:267.23px;width:112.0px;height:18.6px"></div>
<div class="ctb dis" style="left:776.6px;top:268.63px;width:25.2px;height:15.4px"><span>CT</span></div>
<div class="f fw g" style="left:804.0px;top:267.23px;width:39.0px;height:18.6px"></div>
<div class="f fw g" style="left:843.2px;top:267.23px;width:72.7px;height:18.6px"></div>
<div class="f fw g" style="left:916.1px;top:267.23px;width:73.9px;height:18.6px"></div>
<div class="f fw g" style="left:990.2px;top:267.23px;width:73.0px;height:18.6px"></div>
<div class="f fw g" style="left:1063.3px;top:267.23px;width:38.8px;height:18.6px"></div>
<div class="f fw g" style="left:1102.0px;top:267.23px;width:78.2px;height:18.6px"></div>
<div class="f fw g" style="left:1180.2px;top:267.23px;width:78.9px;height:18.6px"></div>
<div class="f fw g" style="left:1259.1px;top:267.23px;width:43.1px;height:18.6px"></div>
<div class="f fw g" style="left:20.2px;top:285.9px;width:54.0px;height:18.6px"></div>
<div class="f fw g" style="left:74.1px;top:285.9px;width:62.1px;height:18.6px"></div>
<div class="f fw g" style="left:136.1px;top:285.9px;width:58.8px;height:18.6px"></div>
<div class="f fw g" style="left:195.2px;top:285.9px;width:18.8px;height:18.6px"></div>
<div class="f fw g" style="left:214.2px;top:285.9px;width:105.8px;height:18.6px"></div>
<div class="f fw g" style="left:320.2px;top:285.9px;width:22.8px;height:18.6px"></div>
<div class="f fw g" style="left:343.3px;top:285.9px;width:67.5px;height:18.6px"></div>
<div class="f fw g" style="left:411.0px;top:285.9px;width:68.8px;height:18.6px"></div>
<div class="f fw g" style="left:480.1px;top:285.9px;width:69.8px;height:18.6px"></div>
<div class="f fw g" style="left:550.0px;top:285.9px;width:111.6px;height:18.6px"></div>
<div class="f fw g" style="left:662.0px;top:285.9px;width:112.0px;height:18.6px"></div>
<div class="ctb dis" style="left:776.6px;top:287.3px;width:25.2px;height:15.4px"><span>CT</span></div>
<div class="f fw g" style="left:804.0px;top:285.9px;width:39.0px;height:18.6px"></div>
<div class="f fw g" style="left:843.2px;top:285.9px;width:72.7px;height:18.6px"></div>
<div class="f fw g" style="left:916.1px;top:285.9px;width:73.9px;height:18.6px"></div>
<div class="f fw g" style="left:990.2px;top:285.9px;width:73.0px;height:18.6px"></div>
<div class="f fw g" style="left:1063.3px;top:285.9px;width:38.8px;height:18.6px"></div>
<div class="f fw g" style="left:1102.0px;top:285.9px;width:78.2px;height:18.6px"></div>
<div class="f fw g" style="left:1180.2px;top:285.9px;width:78.9px;height:18.6px"></div>
<div class="f fw g" style="left:1259.1px;top:285.9px;width:43.1px;height:18.6px"></div>
<div class="f fw g" style="left:20.2px;top:304.57px;width:54.0px;height:18.6px"></div>
<div class="f fw g" style="left:74.1px;top:304.57px;width:62.1px;height:18.6px"></div>
<div class="f fw g" style="left:136.1px;top:304.57px;width:58.8px;height:18.6px"></div>
<div class="f fw g" style="left:195.2px;top:304.57px;width:18.8px;height:18.6px"></div>
<div class="f fw g" style="left:214.2px;top:304.57px;width:105.8px;height:18.6px"></div>
<div class="f fw g" style="left:320.2px;top:304.57px;width:22.8px;height:18.6px"></div>
<div class="f fw g" style="left:343.3px;top:304.57px;width:67.5px;height:18.6px"></div>
<div class="f fw g" style="left:411.0px;top:304.57px;width:68.8px;height:18.6px"></div>
<div class="f fw g" style="left:480.1px;top:304.57px;width:69.8px;height:18.6px"></div>
<div class="f fw g" style="left:550.0px;top:304.57px;width:111.6px;height:18.6px"></div>
<div class="f fw g" style="left:662.0px;top:304.57px;width:112.0px;height:18.6px"></div>
<div class="ctb dis" style="left:776.6px;top:305.97px;width:25.2px;height:15.4px"><span>CT</span></div>
<div class="f fw g" style="left:804.0px;top:304.57px;width:39.0px;height:18.6px"></div>
<div class="f fw g" style="left:843.2px;top:304.57px;width:72.7px;height:18.6px"></div>
<div class="f fw g" style="left:916.1px;top:304.57px;width:73.9px;height:18.6px"></div>
<div class="f fw g" style="left:990.2px;top:304.57px;width:73.0px;height:18.6px"></div>
<div class="f fw g" style="left:1063.3px;top:304.57px;width:38.8px;height:18.6px"></div>
<div class="f fw g" style="left:1102.0px;top:304.57px;width:78.2px;height:18.6px"></div>
<div class="f fw g" style="left:1180.2px;top:304.57px;width:78.9px;height:18.6px"></div>
<div class="f fw g" style="left:1259.1px;top:304.57px;width:43.1px;height:18.6px"></div>
<div class="f fw g" style="left:20.2px;top:323.24px;width:54.0px;height:18.59px"></div>
<div class="f fw g" style="left:74.1px;top:323.24px;width:62.1px;height:18.59px"></div>
<div class="f fw g" style="left:136.1px;top:323.24px;width:58.8px;height:18.59px"></div>
<div class="f fw g" style="left:195.2px;top:323.24px;width:18.8px;height:18.59px"></div>
<div class="f fw g" style="left:214.2px;top:323.24px;width:105.8px;height:18.59px"></div>
<div class="f fw g" style="left:320.2px;top:323.24px;width:22.8px;height:18.59px"></div>
<div class="f fw g" style="left:343.3px;top:323.24px;width:67.5px;height:18.59px"></div>
<div class="f fw g" style="left:411.0px;top:323.24px;width:68.8px;height:18.59px"></div>
<div class="f fw g" style="left:480.1px;top:323.24px;width:69.8px;height:18.59px"></div>
<div class="f fw g" style="left:550.0px;top:323.24px;width:111.6px;height:18.59px"></div>
<div class="f fw g" style="left:662.0px;top:323.24px;width:112.0px;height:18.59px"></div>
<div class="ctb dis" style="left:776.6px;top:324.64px;width:25.2px;height:15.4px"><span>CT</span></div>
<div class="f fw g" style="left:804.0px;top:323.24px;width:39.0px;height:18.59px"></div>
<div class="f fw g" style="left:843.2px;top:323.24px;width:72.7px;height:18.59px"></div>
<div class="f fw g" style="left:916.1px;top:323.24px;width:73.9px;height:18.59px"></div>
<div class="f fw g" style="left:990.2px;top:323.24px;width:73.0px;height:18.59px"></div>
<div class="f fw g" style="left:1063.3px;top:323.24px;width:38.8px;height:18.59px"></div>
<div class="f fw g" style="left:1102.0px;top:323.24px;width:78.2px;height:18.59px"></div>
<div class="f fw g" style="left:1180.2px;top:323.24px;width:78.9px;height:18.59px"></div>
<div class="f fw g" style="left:1259.1px;top:323.24px;width:43.1px;height:18.59px"></div>
<div class="f fw g" style="left:20.2px;top:341.9px;width:54.0px;height:18.6px"></div>
<div class="f fw g" style="left:74.1px;top:341.9px;width:62.1px;height:18.6px"></div>
<div class="f fw g" style="left:136.1px;top:341.9px;width:58.8px;height:18.6px"></div>
<div class="f fw g" style="left:195.2px;top:341.9px;width:18.8px;height:18.6px"></div>
<div class="f fw g" style="left:214.2px;top:341.9px;width:105.8px;height:18.6px"></div>
<div class="f fw g" style="left:320.2px;top:341.9px;width:22.8px;height:18.6px"></div>
<div class="f fw g" style="left:343.3px;top:341.9px;width:67.5px;height:18.6px"></div>
<div class="f fw g" style="left:411.0px;top:341.9px;width:68.8px;height:18.6px"></div>
<div class="f fw g" style="left:480.1px;top:341.9px;width:69.8px;height:18.6px"></div>
<div class="f fw g" style="left:550.0px;top:341.9px;width:111.6px;height:18.6px"></div>
<div class="f fw g" style="left:662.0px;top:341.9px;width:112.0px;height:18.6px"></div>
<div class="ctb dis" style="left:776.6px;top:343.3px;width:25.2px;height:15.4px"><span>CT</span></div>
<div class="f fw g" style="left:804.0px;top:341.9px;width:39.0px;height:18.6px"></div>
<div class="f fw g" style="left:843.2px;top:341.9px;width:72.7px;height:18.6px"></div>
<div class="f fw g" style="left:916.1px;top:341.9px;width:73.9px;height:18.6px"></div>
<div class="f fw g" style="left:990.2px;top:341.9px;width:73.0px;height:18.6px"></div>
<div class="f fw g" style="left:1063.3px;top:341.9px;width:38.8px;height:18.6px"></div>
<div class="f fw g" style="left:1102.0px;top:341.9px;width:78.2px;height:18.6px"></div>
<div class="f fw g" style="left:1180.2px;top:341.9px;width:78.9px;height:18.6px"></div>
<div class="f fw g" style="left:1259.1px;top:341.9px;width:43.1px;height:18.6px"></div>
<div class="f fw g" style="left:20.2px;top:360.57px;width:54.0px;height:18.6px"></div>
<div class="f fw g" style="left:74.1px;top:360.57px;width:62.1px;height:18.6px"></div>
<div class="f fw g" style="left:136.1px;top:360.57px;width:58.8px;height:18.6px"></div>
<div class="f fw g" style="left:195.2px;top:360.57px;width:18.8px;height:18.6px"></div>
<div class="f fw g" style="left:214.2px;top:360.57px;width:105.8px;height:18.6px"></div>
<div class="f fw g" style="left:320.2px;top:360.57px;width:22.8px;height:18.6px"></div>
<div class="f fw g" style="left:343.3px;top:360.57px;width:67.5px;height:18.6px"></div>
<div class="f fw g" style="left:411.0px;top:360.57px;width:68.8px;height:18.6px"></div>
<div class="f fw g" style="left:480.1px;top:360.57px;width:69.8px;height:18.6px"></div>
<div class="f fw g" style="left:550.0px;top:360.57px;width:111.6px;height:18.6px"></div>
<div class="f fw g" style="left:662.0px;top:360.57px;width:112.0px;height:18.6px"></div>
<div class="ctb dis" style="left:776.6px;top:361.97px;width:25.2px;height:15.4px"><span>CT</span></div>
<div class="f fw g" style="left:804.0px;top:360.57px;width:39.0px;height:18.6px"></div>
<div class="f fw g" style="left:843.2px;top:360.57px;width:72.7px;height:18.6px"></div>
<div class="f fw g" style="left:916.1px;top:360.57px;width:73.9px;height:18.6px"></div>
<div class="f fw g" style="left:990.2px;top:360.57px;width:73.0px;height:18.6px"></div>
<div class="f fw g" style="left:1063.3px;top:360.57px;width:38.8px;height:18.6px"></div>
<div class="f fw g" style="left:1102.0px;top:360.57px;width:78.2px;height:18.6px"></div>
<div class="f fw g" style="left:1180.2px;top:360.57px;width:78.9px;height:18.6px"></div>
<div class="f fw g" style="left:1259.1px;top:360.57px;width:43.1px;height:18.6px"></div>
<div class="f fw g" style="left:20.2px;top:379.24px;width:54.0px;height:18.6px"></div>
<div class="f fw g" style="left:74.1px;top:379.24px;width:62.1px;height:18.6px"></div>
<div class="f fw g" style="left:136.1px;top:379.24px;width:58.8px;height:18.6px"></div>
<div class="f fw g" style="left:195.2px;top:379.24px;width:18.8px;height:18.6px"></div>
<div class="f fw g" style="left:214.2px;top:379.24px;width:105.8px;height:18.6px"></div>
<div class="f fw g" style="left:320.2px;top:379.24px;width:22.8px;height:18.6px"></div>
<div class="f fw g" style="left:343.3px;top:379.24px;width:67.5px;height:18.6px"></div>
<div class="f fw g" style="left:411.0px;top:379.24px;width:68.8px;height:18.6px"></div>
<div class="f fw g" style="left:480.1px;top:379.24px;width:69.8px;height:18.6px"></div>
<div class="f fw g" style="left:550.0px;top:379.24px;width:111.6px;height:18.6px"></div>
<div class="f fw g" style="left:662.0px;top:379.24px;width:112.0px;height:18.6px"></div>
<div class="ctb dis" style="left:776.6px;top:380.64px;width:25.2px;height:15.4px"><span>CT</span></div>
<div class="f fw g" style="left:804.0px;top:379.24px;width:39.0px;height:18.6px"></div>
<div class="f fw g" style="left:843.2px;top:379.24px;width:72.7px;height:18.6px"></div>
<div class="f fw g" style="left:916.1px;top:379.24px;width:73.9px;height:18.6px"></div>
<div class="f fw g" style="left:990.2px;top:379.24px;width:73.0px;height:18.6px"></div>
<div class="f fw g" style="left:1063.3px;top:379.24px;width:38.8px;height:18.6px"></div>
<div class="f fw g" style="left:1102.0px;top:379.24px;width:78.2px;height:18.6px"></div>
<div class="f fw g" style="left:1180.2px;top:379.24px;width:78.9px;height:18.6px"></div>
<div class="f fw g" style="left:1259.1px;top:379.24px;width:43.1px;height:18.6px"></div>
<div class="f fw g" style="left:20.2px;top:397.9px;width:54.0px;height:18.6px"></div>
<div class="f fw g" style="left:74.1px;top:397.9px;width:62.1px;height:18.6px"></div>
<div class="f fw g" style="left:136.1px;top:397.9px;width:58.8px;height:18.6px"></div>
<div class="f fw g" style="left:195.2px;top:397.9px;width:18.8px;height:18.6px"></div>
<div class="f fw g" style="left:214.2px;top:397.9px;width:105.8px;height:18.6px"></div>
<div class="f fw g" style="left:320.2px;top:397.9px;width:22.8px;height:18.6px"></div>
<div class="f fw g" style="left:343.3px;top:397.9px;width:67.5px;height:18.6px"></div>
<div class="f fw g" style="left:411.0px;top:397.9px;width:68.8px;height:18.6px"></div>
<div class="f fw g" style="left:480.1px;top:397.9px;width:69.8px;height:18.6px"></div>
<div class="f fw g" style="left:550.0px;top:397.9px;width:111.6px;height:18.6px"></div>
<div class="f fw g" style="left:662.0px;top:397.9px;width:112.0px;height:18.6px"></div>
<div class="ctb dis" style="left:776.6px;top:399.3px;width:25.2px;height:15.4px"><span>CT</span></div>
<div class="f fw g" style="left:804.0px;top:397.9px;width:39.0px;height:18.6px"></div>
<div class="f fw g" style="left:843.2px;top:397.9px;width:72.7px;height:18.6px"></div>
<div class="f fw g" style="left:916.1px;top:397.9px;width:73.9px;height:18.6px"></div>
<div class="f fw g" style="left:990.2px;top:397.9px;width:73.0px;height:18.6px"></div>
<div class="f fw g" style="left:1063.3px;top:397.9px;width:38.8px;height:18.6px"></div>
<div class="f fw g" style="left:1102.0px;top:397.9px;width:78.2px;height:18.6px"></div>
<div class="f fw g" style="left:1180.2px;top:397.9px;width:78.9px;height:18.6px"></div>
<div class="f fw g" style="left:1259.1px;top:397.9px;width:43.1px;height:18.6px"></div>
<div style="position:absolute;left:76.9px;top:232.5px;width:1px;height:13px;background:#000060"></div>
<div class="vsb" style="left:8.8px;top:230.6px;width:11.4px;height:184px"></div>
<div class="vsbline" style="left:9.4px;top:244px;width:10px"></div>
<div class="vsbline" style="left:9.4px;top:399.8px;width:10px;background:#98a4be"></div>
<svg class="abs" style="left:8.9px;top:229.8px" width="11" height="186" viewBox="0 0 11 186"><path d="M2.4 8.9 L6 5.2 L9.6 8.9Z" fill="#66667c"/><path d="M2.4 175.2 L6 179.2 L9.6 175.2Z" fill="#66667c"/><g stroke="#8088a0" stroke-width="0.8"><path d="M1.6 70l1.2-1.2M1.6 76l1.2-1.2M1.6 82l1.2-1.2M1.6 88l1.2-1.2M1.6 94l1.2-1.2M1.6 100l1.2-1.2M6.6 67l1.2-1.2M6.6 73l1.2-1.2M6.6 79l1.2-1.2M6.6 85l1.2-1.2M6.6 91l1.2-1.2M6.6 97l1.2-1.2M6.6 103l1.2-1.2"/></g></svg>
<div class="f fy" style="left:124.1px;top:416.4px;width:71.0px;height:18.5px"></div>
<div class="f fy" style="left:330.3px;top:416.4px;width:79.9px;height:18.5px"></div>
<div class="f fy" style="left:411.9px;top:416.4px;width:67.6px;height:18.5px"><span class="gv r dn">0.000</span></div>
<div class="f fy" style="left:480.8px;top:416.4px;width:68.9px;height:18.5px"><span class="gv r dn">0.000</span></div>
<div class="f fy" style="left:662.5px;top:416.4px;width:111.0px;height:18.5px"></div>
<div class="f fy" style="left:916.5px;top:416.4px;width:73.1px;height:18.5px"></div>
<div class="f fy" style="left:1179.5px;top:416.4px;width:77.7px;height:18.5px"><span class="gv r dn">0.00</span></div>
<div class="fr" style="left:9.7px;top:442.6px;width:234.7px;height:50.2px"></div>
<div class="t b frlab" style="left:13px;top:433.7px;padding:0 24px 0 3px">Descrição</div>
<div class="t " style="right:1122.5px;top:448.7px">Unid.Volume</div>
<div class="f fy" style="left:142.5px;top:448.4px;width:93.3px;height:19.0px"></div>
<div class="t " style="right:1122.5px;top:474.2px">Unidade De Faturamento.</div>
<div class="f fy" style="left:142.5px;top:472.4px;width:93.3px;height:19.0px"></div>
<div class="fr" style="left:242.9px;top:442.6px;width:381px;height:50.2px"></div>
<div class="t b frlab" style="left:246.5px;top:433.7px;padding:0 24px 0 3px">Descrição</div>
<div class="t " style="right:975.5px;top:448.7px">Produto</div>
<div class="f fy" style="left:290.9px;top:448.4px;width:330.9px;height:19.0px"></div>
<div class="t " style="right:975.5px;top:474.2px">Ct</div>
<div class="f fy" style="left:290.9px;top:472.4px;width:330.9px;height:19.0px"></div>
<div class="fr" style="left:9.7px;top:497.6px;width:616.5px;height:50.6px"></div>
<div class="t b frlab" style="left:12px;top:488px;padding:0 7px 0 3px">Observacao Produto</div>
<div class="t " style="left:16px;top:504.7px">Obs. Contribuinte</div>
<div class="f fy" style="left:112.0px;top:500.6px;width:127.5px;height:20.6px"></div>
<div class="f fy" style="left:240.5px;top:500.6px;width:380.2px;height:20.6px"></div>
<div class="t " style="left:16px;top:527.7px">Obs. Fiscal</div>
<div class="f fy" style="left:112.0px;top:523.4px;width:127.5px;height:20.5px"></div>
<div class="f fy" style="left:240.5px;top:523.4px;width:380.2px;height:20.5px"></div>
<div class="fr2" style="left:9.7px;top:549px;width:616.3px;height:67.6px"></div>
<div class="t b" style="left:206.5px;width:200px;text-align:center;top:551.7px">Partilha Do Icms</div>
<div class="t " style="right:1162.5px;top:572.7px">% Uf Origem</div>
<div class="f fw" style="left:104.5px;top:570.4px;width:79.2px;height:20.3px"></div>
<div class="t " style="right:983.5px;top:572.7px">% Uf Destino</div>
<div class="f fw" style="left:285.0px;top:570.4px;width:78.7px;height:20.3px"></div>
<div class="t " style="right:758.5px;top:572.7px">% Aliquota Diferencial</div>
<div class="f fw" style="left:508.5px;top:570.4px;width:79.7px;height:20.3px"></div>
<div class="t " style="right:1162.5px;top:593.7px">Base Destino</div>
<div class="f fw" style="left:104.5px;top:591.4px;width:79.2px;height:20.3px"></div>
<div class="t " style="right:983.5px;top:592.2px">Diferenca Origem</div>
<div class="f fw" style="left:285.0px;top:591.4px;width:78.7px;height:20.3px"></div>
<div class="t " style="right:758.5px;top:592.2px">Diferenca Destino</div>
<div class="f fw" style="left:508.5px;top:591.4px;width:79.7px;height:20.3px"></div>
<div class="t " style="left:669.5px;top:439.7px">Produto</div>
<div class="f fy" style="left:662.1px;top:454.4px;width:61.4px;height:17.0px"></div>
<div class="f fy" style="left:725.7px;top:454.4px;width:353.5px;height:17.0px"></div>
<div class="t " style="right:67px;top:436.7px">Nro.Ncm</div>
<div class="f fy" style="left:1083.0px;top:451.4px;width:112.2px;height:20.1px"></div>
<div class="t " style="left:1248px;top:436.7px">Descricao</div>
<div class="f fy" style="left:1205.7px;top:451.4px;width:94.5px;height:20.1px"></div>
<div class="t " style="right:479.5px;top:475.7px">Valor Conteudo Importacao</div>
<div class="f fy" style="left:788.3px;top:474.6px;width:81.1px;height:17.4px"><span class="gv r">0.000000</span></div>
<div class="t " style="right:225.5px;top:475.7px">% Conteudo Importacao</div>
<div class="f fy" style="left:1042.0px;top:474.6px;width:37.2px;height:17.4px"></div>
<div class="t " style="left:1083px;top:475.7px">CST Importacao</div>
<div class="f fy" style="left:1161.5px;top:474.6px;width:35.2px;height:17.4px"></div>
<div class="t " style="left:1202.5px;top:475.7px">% ICMS Importacao</div>
<div class="btn" style="left:635.6px;top:515.8px;width:141.6px;height:23.2px"><span>Dados Do Veiculo</span></div>
<div class="t " style="left:792.8px;top:503.7px">Cod Codif</div>
<div class="f fy" style="left:792.1px;top:520.6px;width:468.5px;height:17.8px"></div>
<div class="t " style="right:475.5px;top:551.7px">% Comb Pobreza</div>
<div class="f fw" style="left:792.1px;top:548.2px;width:79.4px;height:20.6px"></div>
<div class="t " style="right:249px;top:551.7px">Vlr Comb Pobreza</div>
<div class="f fw" style="left:1019.5px;top:548.4px;width:78.2px;height:20.3px"></div>
<div class="t " style="left:1107.5px;top:551.7px">Cest</div>
<div class="f fw" style="left:1133.5px;top:548.4px;width:79.2px;height:20.3px"></div>
<div class="t " style="left:1252.5px;top:551.7px">Beneficio</div>
<div class="t " style="right:475px;top:579.7px">Cliente Final</div>
<div class="f fy" style="left:792.1px;top:575.8px;width:79.4px;height:21.4px"></div>
<div class="f fy" style="left:874.5px;top:575.8px;width:328.2px;height:21.4px"></div>
<div class="t " style="left:1209px;top:579.7px">Referencia</div>
<div class="tb" style="left:629.2px;top:601.2px;width:23.4px;height:23.3px"><svg style="left:-1px;top:-1px" width="24" height="24.7" viewBox="0 0 24 24.7"><path d="M3.6 19.6h12.2" stroke="#fff" stroke-width="1.4"/><path d="M9.8 4.1h5v14.6H8" fill="#fff" stroke="#000" stroke-width="1.2"/><path d="M14.9 4.1v14.6" stroke="#000" stroke-width="1.6"/><path d="M3.6 4.2h7.2v12l-3.4.8v1.6H3.6z" fill="#f00" stroke="#000" stroke-width="0.6"/><rect x="8.4" y="8.6" width="1.1" height="1.1" fill="#ff0"/><path d="M2.6 8.1h1.6M2.6 12h1.6" stroke="#ff0" stroke-width="1"/></svg></div>
</div></body></html>
